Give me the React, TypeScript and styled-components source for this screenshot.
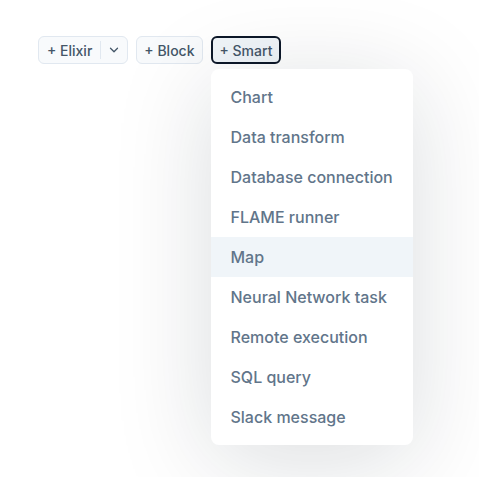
import styled, { createGlobalStyle } from "styled-components";
import { ChevronDown } from "lucide-react";

const items = [
  "Chart",
  "Data transform",
  "Database connection",
  "FLAME runner",
  "Map",
  "Neural Network task",
  "Remote execution",
  "SQL query",
  "Slack message",
];

export default function App() {
  return (
    <>
      <GlobalStyle />
      <Page>
        <Toolbar>
          <SplitButton>
            <SplitMain type="button">+ Elixir</SplitMain>
            <SplitToggle type="button" aria-label="More">
              <ChevronDown size={14} strokeWidth={2.2} />
            </SplitToggle>
          </SplitButton>
          <Button type="button">+ Block</Button>
          <MenuAnchor>
            <Button type="button" $active>
              + Smart
            </Button>
            <Menu role="menu">
              {items.map((item) => (
                <MenuItem key={item} role="menuitem" $hover={item === "Map"}>
                  {item}
                </MenuItem>
              ))}
            </Menu>
          </MenuAnchor>
        </Toolbar>
      </Page>
    </>
  );
}

const GlobalStyle = createGlobalStyle`
  body {
    margin: 0;
    background: #ffffff;
    font-family: Inter, "Noto Sans", sans-serif;
  }
`;

const Page = styled.div`
  padding: 36px 38px;
  min-height: 477px;
  box-sizing: border-box;
`;

const Toolbar = styled.div`
  display: flex;
  align-items: center;
  gap: 8px;
`;

const Button = styled.button<{ $active?: boolean }>`
  display: inline-flex;
  align-items: center;
  height: 28px;
  box-sizing: border-box;
  padding: 0 7px;
  border-radius: 6px;
  border: ${({ $active }) => ($active ? "2px solid #0d1829" : "1px solid #e1e8f0")};
  background: ${({ $active }) => ($active ? "#f0f5f9" : "#f8fafc")};
  color: #445668;
  font-family: Inter, sans-serif;
  font-size: 14px;
  font-weight: 500;
  cursor: pointer;
`;

const SplitButton = styled.div`
  display: inline-flex;
  align-items: center;
  height: 28px;
  box-sizing: border-box;
  border: 1px solid #e1e8f0;
  border-radius: 6px;
  background: #f8fafc;
`;

const SplitMain = styled.button`
  border: none;
  background: transparent;
  padding: 0 8px;
  color: #445668;
  font-family: Inter, sans-serif;
  font-size: 14px;
  font-weight: 500;
  border-right: 1px solid #e1e8f0;
  height: 18px;
`;

const SplitToggle = styled.button`
  display: flex;
  align-items: center;
  justify-content: center;
  border: none;
  background: transparent;
  padding: 0 6px;
  color: #445668;
`;

const MenuAnchor = styled.div`
  position: relative;
  display: inline-flex;
`;

const Menu = styled.div`
  position: absolute;
  top: calc(100% + 5px);
  left: 0;
  width: 202px;
  padding: 8px 0;
  background: #ffffff;
  border-radius: 8px;
  box-shadow: 0 15px 99px rgba(13, 24, 41, 0.15);
  z-index: 10;
`;

const MenuItem = styled.div<{ $hover?: boolean }>`
  padding: 8px 20px;
  font-size: 16px;
  line-height: 24px;
  font-weight: 500;
  color: #61758a;
  white-space: nowrap;
  background: ${({ $hover }) => ($hover ? "#f0f5f9" : "transparent")};
`;
